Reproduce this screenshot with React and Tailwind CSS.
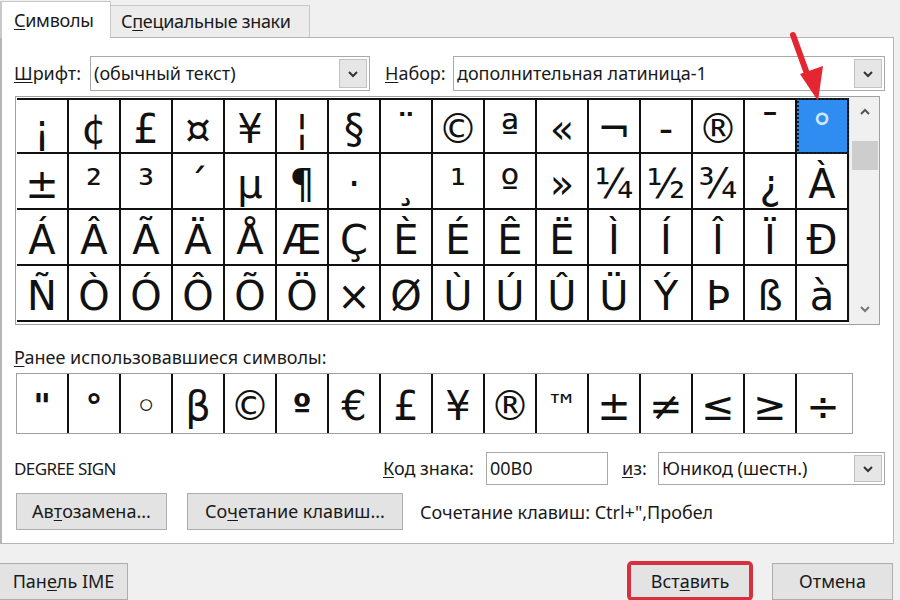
import React from "react";

const ui = "font-['Noto_Sans',_'Open_Sans',_sans-serif]";
const sym = "font-['DejaVu_Sans',_Verdana,_sans-serif]";

const rows = [
  ["¡", "¢", "£", "¤", "¥", "¦", "§", "¨", "©", "ª", "«", "¬", "-", "®", "¯", "°"],
  ["±", "²", "³", "´", "µ", "¶", "·", "¸", "¹", "º", "»", "¼", "½", "¾", "¿", "À"],
  ["Á", "Â", "Ã", "Ä", "Å", "Æ", "Ç", "È", "É", "Ê", "Ë", "Ì", "Í", "Î", "Ï", "Ð"],
  ["Ñ", "Ò", "Ó", "Ô", "Õ", "Ö", "×", "Ø", "Ù", "Ú", "Û", "Ü", "Ý", "Þ", "ß", "à"],
];

const recent = ['"', "°", "◦", "β", "©", "º", "€", "£", "¥", "®", "™", "±", "≠", "≤", "≥", "÷"];

function U({ children }) {
  return <span className="underline underline-offset-2">{children}</span>;
}

function Chevron() {
  return (
    <svg width="12" height="8" viewBox="0 0 12 8">
      <path d="M2 2 L6 6 L10 2" fill="none" stroke="#333" strokeWidth="2" />
    </svg>
  );
}

function Select({ value, className }) {
  return (
    <div className={`flex h-[35px] border border-[#a9a9a9] bg-white ${className}`}>
      <div className="flex-1 flex items-center pl-[3px] text-[#1a1a1a] whitespace-nowrap">{value}</div>
      <div className="w-[28px] my-[2px] mr-[2px] flex items-center justify-center bg-[#e6e6e6] border border-[#c2c2c2]">
        <Chevron />
      </div>
    </div>
  );
}

function Button({ children, className = "" }) {
  return (
    <div className={`h-[37px] flex items-center justify-center bg-[#e3e3e3] border border-[#adadad] text-[#1a1a1a] whitespace-nowrap ${className}`}>
      {children}
    </div>
  );
}

export default function App() {
  return (
    <div className={`relative w-[900px] h-[600px] overflow-hidden bg-[#f0f0f0] text-[18px] text-[#1a1a1a] ${ui}`}>
      {/* tabs */}
      <div className="flex items-end h-[37px]">
        <div className="w-[111px] h-[37px] bg-white border-l-[2px] border-t border-r border-[#c8c8c8] flex items-center pl-[12px] relative z-10 -mb-px">
          <span className="tracking-[-0.3px]"><U>С</U>имволы</span>
        </div>
        <div className="w-[199px] h-[32px] bg-[#ececec] border-t border-r border-[#c8c8c8] flex items-center pl-[10px]">
          <span className="tracking-[-0.3px]">С<U>п</U>ециальные знаки</span>
        </div>
      </div>

      {/* panel */}
      <div className="w-[894px] h-[507px] bg-white border-l-[2px] border-r border-t border-b border-[#b5b5b5] pl-[12px] pr-[7px] flex flex-col">
        <div className="mt-[18px] flex items-center">
          <span className="w-[76px]"><U>Ш</U>рифт:</span>
          <Select value="(обычный текст)" className="w-[280px]" />
          <span className="ml-[15px] w-[68px]"><U>Н</U>абор:</span>
          <Select value="дополнительная латиница-1" className="w-[432px]" />
        </div>

        {/* symbol grid */}
        <div className="mt-[5px] ml-[1px] w-[865px] h-[229px] border border-[#a0a0a0] flex">
          <div className={`pl-[1px] pt-[1px] ${sym}`}>
            {rows.map((r, ri) => (
              <div key={ri} className="flex">
                {r.map((c, ci) => {
                  const selected = ri === 0 && ci === 15;
                  return (
                    <div
                      key={ci}
                      className={`w-[52px] h-[56px] border-r-2 border-b-2 border-[#111] flex items-center justify-center text-[40px] leading-none overflow-hidden ${
                        ri === 0 ? "border-t-2" : ""
                      } ${selected ? "bg-[#2f8cf0] text-[#cfe8ff] outline-2 outline-dotted outline-[#123] -outline-offset-2" : "bg-white text-[#111]"}`}
                    >
                      <span className="pt-[6px]">{c}</span>
                    </div>
                  );
                })}
              </div>
            ))}
          </div>
          <div className="flex-1 bg-[#f0f0f0] flex flex-col items-center border-l border-[#e2e2e2]">
            <div className="h-[30px] flex items-center justify-center">
              <svg width="12" height="8" viewBox="0 0 12 8">
                <path d="M2 6 L6 2 L10 6" fill="none" stroke="#555" strokeWidth="2" />
              </svg>
            </div>
            <div className="mt-[14px] w-[26px] h-[29px] bg-[#cdcdcd]" />
            <div className="flex-1" />
            <div className="h-[30px] flex items-center justify-center">
              <svg width="12" height="8" viewBox="0 0 12 8">
                <path d="M2 2 L6 6 L10 2" fill="none" stroke="#777" strokeWidth="2" />
              </svg>
            </div>
          </div>
        </div>

        {/* recent */}
        <div className="mt-[21px] h-[22px] flex items-center">
          <span><U>Р</U>анее использовавшиеся символы:</span>
        </div>
        <div className={`mt-[5px] ml-[2px] w-[837px] h-[61px] border border-[#a0a0a0] flex ${sym}`}>
          {recent.map((c, i) => (
            <div
              key={i}
              className={`w-[52px] h-full flex items-center justify-center text-[40px] leading-none bg-white text-[#111] overflow-hidden ${
                i < 15 ? "border-r-2 border-[#111]" : ""
              }`}
            >
              <span className={`pt-[4px] ${i === 0 || i === 1 || i === 5 ? "font-bold text-[34px]" : i === 10 ? "text-[32px]" : ""}`}>{c}</span>
            </div>
          ))}
        </div>

        {/* code row */}
        <div className="mt-[18px] flex items-center h-[33px]">
          <span className="w-[369px] text-[17px] tracking-[-0.6px]">DEGREE SIGN</span>
          <span className="w-[103px]"><U>К</U>од знака:</span>
          <div className="w-[122px] h-[33px] border border-[#a9a9a9] bg-white flex items-center pl-[3px]">00B0</div>
          <span className="ml-[14px] w-[36px]"><U>и</U>з:</span>
          <Select value="Юникод (шестн.)" className="w-[227px] !h-[33px]" />
        </div>

        <div className="mt-[8px] flex items-center">
          <Button className="w-[151px] ml-[2px]">Ав<U>т</U>озамена...</Button>
          <Button className="w-[216px] ml-[20px]">Со<U>ч</U>етание клавиш...</Button>
          <span className="ml-[17px] pt-[2px]">Сочетание клавиш: Ctrl+",Пробел</span>
        </div>
      </div>

      {/* footer */}
      <div className="mt-[17px] flex items-center">
        <Button className="w-[129px] -ml-px">Пан<U>е</U>ль IME</Button>
        <div className="flex-1" />
        <div className="w-[126px] h-[40px] rounded-[5px] border-[4px] border-[#d8303f] flex">
          <div className="flex-1 bg-[#e3e3e3] flex items-center justify-center">Вст<U>а</U>вить</div>
        </div>
        <Button className="w-[121px] ml-[19px] mr-[7px]">Отмена</Button>
      </div>

      {/* annotation arrow */}
      <svg className="absolute left-0 top-0 pointer-events-none" width="900" height="600">
        <line x1="793" y1="35" x2="810" y2="82" stroke="#e3262f" strokeWidth="6" strokeLinecap="round" />
        <polygon points="800,74 823,66 818,101" fill="#e3262f" />
      </svg>
    </div>
  );
}
